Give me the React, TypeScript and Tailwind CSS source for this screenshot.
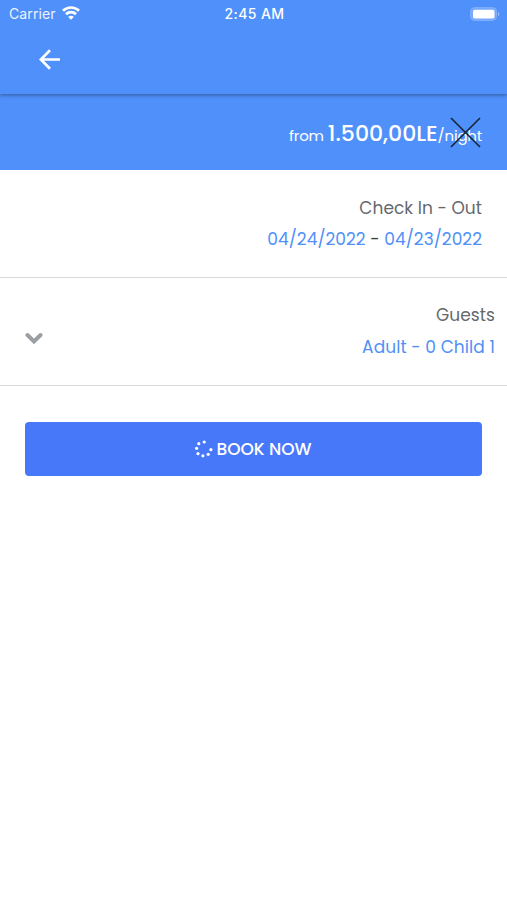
function StatusBar() {
  return (
    <div className="grid h-7 grid-cols-3 items-center pl-[9px] pr-[7px] font-['Inter',sans-serif] text-white">
      <div className="flex items-center gap-[6px]">
        <span className="text-[14px] leading-7 tracking-[0.1px] opacity-90">Carrier</span>
        <svg className="-mt-[2px]" width="18" height="14" viewBox="0 0 18 14" fill="none" stroke="currentColor" strokeWidth="2.7">
          <path d="M1 4.8a11.4 11.4 0 0 1 16 0" />
          <path d="M4 8.2a7.2 7.2 0 0 1 10 0" />
          <path d="M9 13.7 6.2 10.9a3.9 3.9 0 0 1 5.6 0Z" fill="currentColor" stroke="none" />
        </svg>
      </div>
      <span className="whitespace-nowrap text-center text-[14px] font-medium leading-7 tracking-[0.4px]">2:45 AM</span>
      <svg className="-mt-px justify-self-end" width="30" height="14" viewBox="0 0 30 14">
        <rect x="0.7" y="0.7" width="25.8" height="12.6" rx="3.7" fill="#75a8fc" stroke="#86b3fc" />
        <rect x="3" y="2.7" width="21.5" height="8.8" rx="1.8" fill="#fff" />
        <path d="M28 4.8c1.7.7 1.7 3.7 0 4.4Z" fill="#9dc1fd" />
      </svg>
    </div>
  );
}

const spinnerDots = [
  [9.2, 2],
  [3.8, 3.7],
  [1.6, 8.3],
  [3, 13.7],
  [7.9, 15.8],
  [13.2, 14.3],
  [15.9, 9.7],
];

export default function App() {
  return (
    <div className="min-h-[900px] w-full bg-white font-['Poppins','Inter',sans-serif] text-[#65696e]">
      <header className="relative z-10 h-[94px] bg-[#5090fb] shadow-[0_1px_4px_rgba(0,0,0,0.4)]">
        <StatusBar />
        <button className="ml-[39px] mt-[21px] block text-white" aria-label="Back">
          <svg width="21" height="21" viewBox="0 0 21 21" fill="none" stroke="currentColor" strokeWidth="2.7">
            <path d="M21 10.5H2.5M11 1.3 1.8 10.5l9.2 9.2" />
          </svg>
        </button>
      </header>

      <div className="relative flex h-[76px] items-baseline justify-end bg-[#5090fb] pr-[25px] pt-[22px] text-white">
        <span className="mr-[4px] text-[15px] leading-9 tracking-[-0.2px]">from</span>
        <span className="text-[22px] font-medium leading-9">1.500,00LE</span>
        <span className="text-[15px] leading-9 tracking-[-0.2px]">/night</span>
        <svg className="absolute right-[26px] top-[23px]" width="31" height="31" viewBox="0 0 31 31" fill="none" stroke="#182536" strokeWidth="1.6">
          <path d="m1 1 29 29M30 1 1 30" />
        </svg>
      </div>

      <section className="h-[108px] border-b border-[#d8dadc] pr-[25px] pt-[23px] text-right text-[17px] leading-[31px] tracking-[0.04px]">
        <div>Check In - Out</div>
        <div className="text-[#3b3f44]">
          <span className="text-[#5090f8]">04/24/2022</span> - <span className="text-[#5090f8]">04/23/2022</span>
        </div>
      </section>

      <section className="flex h-[108px] justify-between border-b border-[#d8dadc] pl-[25px] pr-[12px] pt-[21px] text-right text-[17px] leading-8 tracking-[0.07px]">
        <svg className="mt-[33px]" width="18" height="13" viewBox="0 0 18 13" fill="none" stroke="#9b9fa4" strokeWidth="4" strokeLinejoin="miter">
          <path d="m2.5 3 6.5 6.4L15.500 3" strokeLinecap="round" />
        </svg>
        <div>
          <div>Guests</div>
          <div className="text-[#5090f8]">Adult - 0 Child 1</div>
        </div>
      </section>

      <div className="px-[25px] pt-[36px]">
        <button className="flex h-[54px] w-full items-center justify-center gap-[3px] rounded-[4px] bg-[#4878fa] text-white">
          <svg width="18" height="18" viewBox="0 0 18 18" fill="currentColor">
            {spinnerDots.map(([x, y]) => (
              <circle key={`${x}-${y}`} cx={x} cy={y} r="1.6" />
            ))}
          </svg>
          <span className="pt-[2px] text-[17px] font-medium">BOOK NOW</span>
        </button>
      </div>
    </div>
  );
}
